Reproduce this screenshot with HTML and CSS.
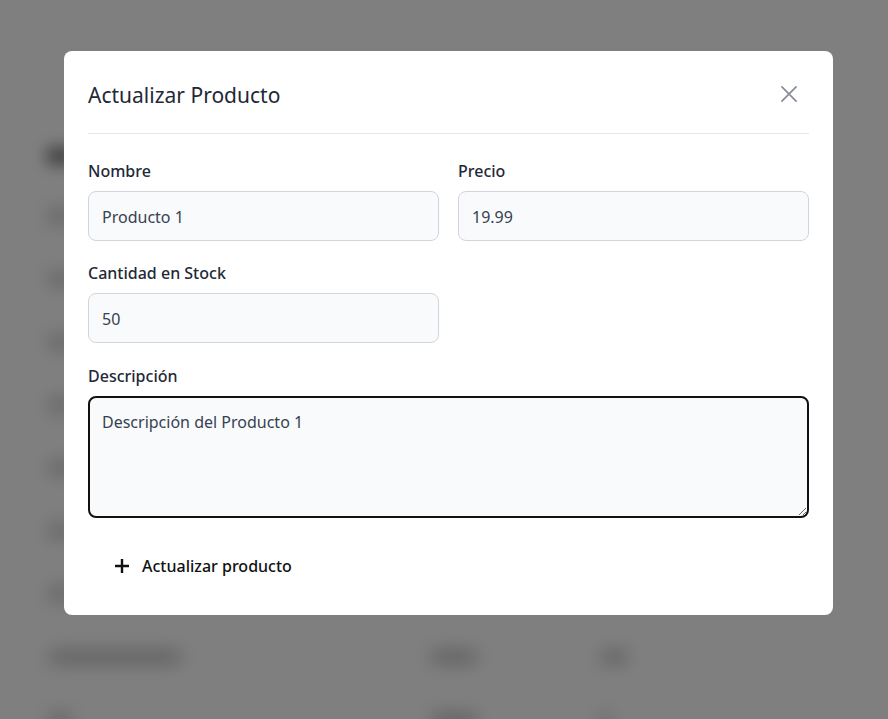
FILE: index.html
```html
<!DOCTYPE html>
<html lang="es">
<head>
<meta charset="utf-8">
<title>Actualizar Producto</title>
<link rel="stylesheet" href="styles.css">
</head>
<body>
<div class="page" aria-hidden="true">
  <div class="bg-heading"></div>
  <div class="bg-row"><span class="blob w1"></span><span class="blob w2"></span><span class="blob w3"></span></div>
  <div class="bg-row"><span class="blob w1"></span><span class="blob w2"></span><span class="blob w3"></span></div>
  <div class="bg-row"><span class="blob w1"></span><span class="blob w2"></span><span class="blob w3"></span></div>
  <div class="bg-row"><span class="blob w1"></span><span class="blob w2"></span><span class="blob w3"></span></div>
  <div class="bg-row"><span class="blob w1"></span><span class="blob w2"></span><span class="blob w3"></span></div>
  <div class="bg-row"><span class="blob w1"></span><span class="blob w2"></span><span class="blob w3"></span></div>
  <div class="bg-row"><span class="blob w1"></span><span class="blob w2"></span><span class="blob w3"></span></div>
  <div class="bg-row"><span class="blob w1 long"></span><span class="blob w2"></span><span class="blob w3"></span></div>
  <div class="bg-row"><span class="blob w1"></span><span class="blob w2"></span><span class="blob w3 short"></span></div>
</div>
<div class="overlay">
  <div class="modal">
    <div class="modal-header">
      <h3 class="modal-title">Actualizar Producto</h3>
      <button class="close" aria-label="Cerrar">
        <svg width="20" height="20" viewBox="0 0 24 24" fill="none" stroke="currentColor" stroke-width="2" stroke-linecap="round"><path d="M3.5 3.5l17 17M20.5 3.5l-17 17"/></svg>
      </button>
    </div>
    <form class="form">
      <div class="row">
        <div class="field">
          <label class="label">Nombre</label>
          <input class="input" type="text" value="Producto 1">
        </div>
        <div class="field">
          <label class="label">Precio</label>
          <input class="input" type="text" value="19.99">
        </div>
      </div>
      <div class="row">
        <div class="field">
          <label class="label">Cantidad en Stock</label>
          <input class="input" type="text" value="50">
        </div>
      </div>
      <div class="field">
        <label class="label">Descripción</label>
        <textarea class="textarea">Descripción del Producto 1</textarea>
      </div>
      <button type="button" class="submit">
        <svg width="14" height="14" viewBox="0 0 14 14" fill="none" stroke="currentColor" stroke-width="2.4"><path d="M7 0v14M0 7h14"/></svg>
        <span>Actualizar producto</span>
      </button>
    </form>
  </div>
</div>
</body>
</html>
```
FILE: styles.css
```css
* { box-sizing: border-box; }
html, body { margin: 0; height: 100%; }
body {
  font-family: "Noto Sans", "Open Sans", sans-serif;
  background: #fff;
  color: #1f2937;
  overflow: hidden;
}
.page { height: 100%; overflow: hidden; padding: 147px 0 0 46px; }
.bg-heading {
  width: 28px; height: 18px; background: #444; border-radius: 8px;
  filter: blur(8px); opacity: 0.7; margin-bottom: 44px;
}
.bg-row {
  height: 63px;
  display: flex;
  align-items: flex-start;
}
.blob {
  display: block; height: 14px; background: #777; border-radius: 7px;
  filter: blur(9px); opacity: 0.45;
}
.w1 { width: 24px; margin-left: 2px; }
.w1.long { width: 134px; }
.w2 { width: 48px; margin-left: 358px; }
.w1.long + .w2 { margin-left: 248px; }
.w3 { width: 28px; margin-left: 122px; }
.w3.short { width: 12px; }
.overlay {
  position: fixed;
  inset: 0;
  background: rgba(0,0,0,0.5);
  display: flex;
  justify-content: center;
  padding: 51px 0 0 9px;
}
.modal {
  width: 769px;
  height: 564px;
  background: #fff;
  border-radius: 8px;
  padding: 0 24px;
}
.modal-header {
  display: flex;
  align-items: center;
  justify-content: space-between;
  height: 83px;
  padding-top: 6px;
  border-bottom: 1px solid #e5e7eb;
}
.modal-title { margin: 0; font-size: 21px; font-weight: 400; color: #1f2937; }
.close {
  border: 0; background: none; padding: 0; color: #858c97;
  display: flex; margin-right: 10px; margin-top: -2px; cursor: pointer;
}
.form { padding-top: 26px; }
.row { display: grid; grid-template-columns: 351px 351px; column-gap: 19px; }
.field { margin-bottom: 21px; }
.row + .row .field, .row + .field { }
.row + .row .field { margin-bottom: 22px; }
.label { display: block; font-size: 16px; font-weight: 500; color: #1f2937; margin-bottom: 9px; line-height: 22px; }
.input, .textarea {
  width: 100%;
  font: inherit;
  font-size: 16px;
  color: #374151;
  background: #f9fafb;
  border: 1px solid #d1d5db;
  border-radius: 8px;
  padding: 2px 13px 0;
  outline: none;
}
.input { height: 50px; }
.textarea {
  display: block;
  height: 122px;
  padding: 13px 12px;
  border: 2px solid #111;
  resize: vertical;
}
.submit {
  display: flex; align-items: center; gap: 13px;
  border: 0; background: none; font: inherit; font-size: 16px; font-weight: 500;
  color: #111; padding: 0 0 0 27px; margin-top: 37px; cursor: pointer;
}
```
